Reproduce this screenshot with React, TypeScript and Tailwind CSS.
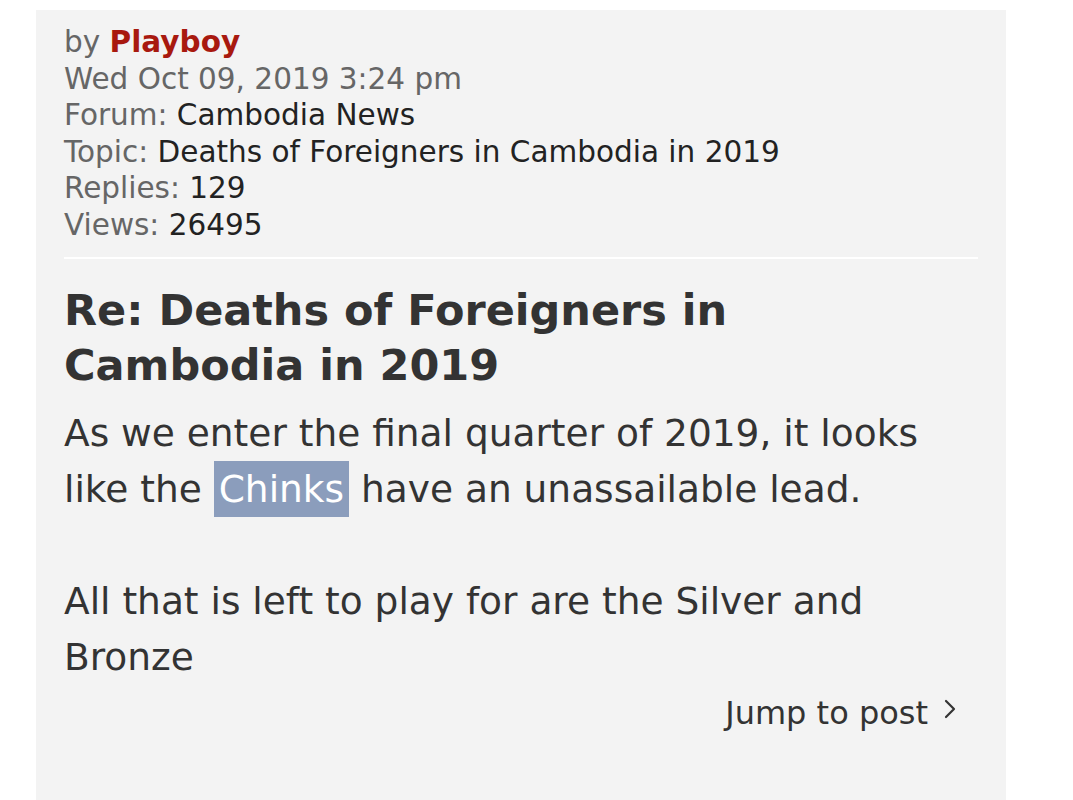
const meta = [
  { label: "Forum:", value: "Cambodia News" },
  { label: "Topic:", value: "Deaths of Foreigners in Cambodia in 2019" },
  { label: "Replies:", value: "129" },
  { label: "Views:", value: "26495" },
];

export default function App() {
  return (
    <div className="min-h-screen bg-white font-['DejaVu_Sans',sans-serif]">
      <div className="ml-9 mr-[67px] mt-2.5 min-h-[790px] bg-[#f3f3f3] px-7 pt-3.5">
        <div className="text-[29.5px] leading-[36.5px] text-[#666]">
          <div>
            by <span className="font-bold text-[#a8190f]">Playboy</span>
          </div>
          <div>Wed Oct 09, 2019 3:24 pm</div>
          {meta.map((m) => (
            <div key={m.label}>
              {m.label} <span className="text-[#222]">{m.value}</span>
            </div>
          ))}
        </div>

        <div className="mt-3.5 h-[2px] bg-white" />

        <h2 className="mt-6 max-w-[860px] text-[43px] font-bold leading-[55px] text-[#333]">
          Re: Deaths of Foreigners in Cambodia in 2019
        </h2>

        <div className="mt-3 text-[37.5px] leading-[56px] text-[#333]">
          <p>
            As we enter the final quarter of 2019, it looks like the{" "}
            <span className="inline-block bg-[#8b9dbc] px-[5px] leading-[56px] text-white">Chinks</span>{" "}
            have an unassailable lead.
          </p>
          <p className="mt-[56px]">All that is left to play for are the Silver and Bronze</p>
        </div>

        <div className="mt-2 flex justify-end pr-[21px]">
          <a className="flex items-center gap-[15px] text-[32px] leading-10 text-[#333]">
            Jump to post
            <svg width="14" height="22" viewBox="0 0 14 22" className="-translate-y-1" fill="none">
              <polyline points="3,3 11,11 3,19" stroke="#333" strokeWidth="2.2" strokeLinecap="round" strokeLinejoin="round" />
            </svg>
          </a>
        </div>
      </div>
    </div>
  );
}
